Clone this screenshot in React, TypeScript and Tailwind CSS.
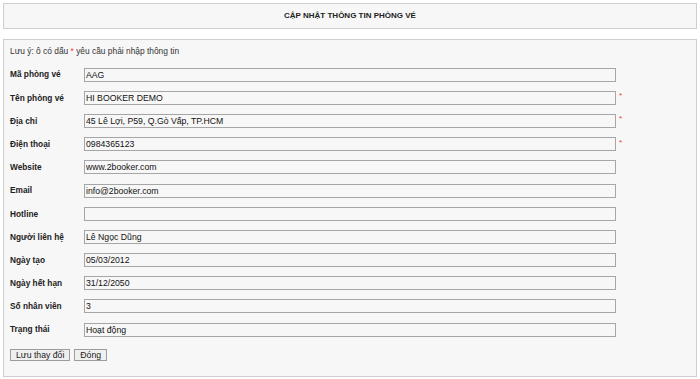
const fields = [
  { label: "Mã phòng vé", value: "AAG", required: false },
  { label: "Tên phòng vé", value: "HI BOOKER DEMO", required: true },
  { label: "Địa chỉ", value: "45 Lê Lợi, P59, Q.Gò Vấp, TP.HCM", required: true },
  { label: "Điện thoại", value: "0984365123", required: true },
  { label: "Website", value: "www.2booker.com", required: false },
  { label: "Email", value: "info@2booker.com", required: false },
  { label: "Hotline", value: "", required: false },
  { label: "Người liên hệ", value: "Lê Ngọc Dũng", required: false },
  { label: "Ngày tạo", value: "05/03/2012", required: false },
  { label: "Ngày hết hạn", value: "31/12/2050", required: false },
  { label: "Số nhân viên", value: "3", required: false },
  { label: "Trạng thái", value: "Hoạt động", required: false },
];

const App = () => {
  return (
    <div
      className="w-[700px] h-[379px] bg-white p-[3px] text-[#222]"
      style={{ fontFamily: '"Liberation Sans", Arial, sans-serif' }}
    >
      <div className="h-[26px] border border-[#cfcfcf] bg-[#f7f7f7] flex items-center justify-center">
        <h1 className="text-[8px] font-bold">CẬP NHẬT THÔNG TIN PHÒNG VÉ</h1>
      </div>

      <div className="mt-[10px] h-[338px] border border-[#cfcfcf] bg-[#f7f7f7] px-[6px]">
        <div className="h-[23px] flex items-center text-[8.4px] text-[#333]">
          Lưu ý: ô có dấu&nbsp;<span className="text-[#ff3030]">*</span>&nbsp;yêu cầu phải nhập thông tin
        </div>

        {fields.map((f) => (
          <div key={f.label} className="h-[23.2px] flex items-center">
            <label className="w-[74px] text-[8.3px] font-bold">{f.label}</label>
            <input
              defaultValue={f.value}
              readOnly
              className="w-[532px] h-[14px] border border-[#a6a6a6] bg-[#f7f7f7] px-[1px] text-[8.7px] text-[#111] outline-none"
            />
            {f.required && <span className="ml-[3px] -mt-[3px] text-[8px] text-[#ff3030]">*</span>}
          </div>
        ))}

        <div className="mt-[8px] flex gap-[4px]">
          <button className="h-[12px] px-[5px] border border-[#9c9c9c] bg-[#efefef] text-[8.7px] leading-none">
            Lưu thay đổi
          </button>
          <button className="h-[12px] px-[5px] border border-[#9c9c9c] bg-[#efefef] text-[8.7px] leading-none">
            Đóng
          </button>
        </div>
      </div>
    </div>
  );
};

export default App;
